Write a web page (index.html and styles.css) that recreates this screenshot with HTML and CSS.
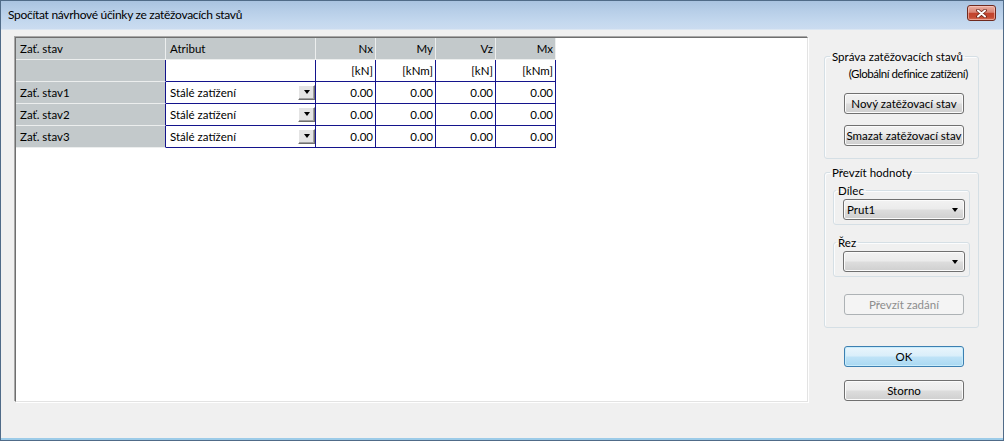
FILE: index.html
```html
<!DOCTYPE html>
<html lang="cs">
<head>
<meta charset="utf-8">
<title>Spočítat návrhové účinky ze zatěžovacích stavů</title>
<link rel="stylesheet" href="styles.css">
</head>
<body>
<div class="window">
  <div class="titlebar">
    <span class="title">Spočítat návrhové účinky ze zatěžovacích stavů</span>
    <span class="close" role="button" aria-label="Zavřít">
      <svg width="11" height="9" viewBox="0 0 11 9">
        <path d="M2 1.5 L9 7.5 M9 1.5 L2 7.5" stroke="#6b2418" stroke-width="3.6" stroke-linecap="round" fill="none"/>
        <path d="M2 1.5 L9 7.5 M9 1.5 L2 7.5" stroke="#ffffff" stroke-width="2" stroke-linecap="round" fill="none"/>
      </svg>
    </span>
  </div>
  <div class="client">
    <div class="gridbox">
      <table class="grid">
        <colgroup>
          <col class="w150"><col class="w150"><col class="w60"><col class="w60"><col class="w60"><col class="w60">
        </colgroup>
        <tr class="hdr">
          <th class="rh">Zať. stav</th>
          <th class="lh">Atribut</th>
          <th>Nx</th><th>My</th><th>Vz</th><th>Mx</th>
        </tr>
        <tr>
          <th class="rh"></th>
          <td class="attr"></td>
          <td>[kN]</td><td>[kNm]</td><td>[kN]</td><td>[kNm]</td>
        </tr>
        <tr>
          <th class="rh">Zať. stav1</th>
          <td class="attr"><div class="attr-in"><span>Stálé zatížení</span><span class="dd"><i class="tri"></i></span></div></td>
          <td>0.00</td><td>0.00</td><td>0.00</td><td>0.00</td>
        </tr>
        <tr>
          <th class="rh">Zať. stav2</th>
          <td class="attr"><div class="attr-in"><span>Stálé zatížení</span><span class="dd"><i class="tri"></i></span></div></td>
          <td>0.00</td><td>0.00</td><td>0.00</td><td>0.00</td>
        </tr>
        <tr>
          <th class="rh">Zať. stav3</th>
          <td class="attr"><div class="attr-in"><span>Stálé zatížení</span><span class="dd"><i class="tri"></i></span></div></td>
          <td>0.00</td><td>0.00</td><td>0.00</td><td>0.00</td>
        </tr>
      </table>
    </div>
    <div class="side">
      <fieldset class="group g1">
        <legend>Správa zatěžovacích stavů</legend>
        <div class="note">(Globální definice zatížení)</div>
        <div class="btn b-first">Nový zatěžovací stav</div>
        <div class="btn b-second">Smazat zatěžovací stav</div>
      </fieldset>
      <fieldset class="group g2">
        <legend>Převzít hodnoty</legend>
        <fieldset class="sub s1">
          <legend>Dílec</legend>
          <div class="combo"><span>Prut1</span><i class="tri"></i></div>
        </fieldset>
        <fieldset class="sub s2">
          <legend>Řez</legend>
          <div class="combo"><span></span><i class="tri"></i></div>
        </fieldset>
        <div class="btn disabled b-take">Převzít zadání</div>
      </fieldset>
      <div class="btn default b-ok">OK</div>
      <div class="btn b-cancel">Storno</div>
    </div>
  </div>
</div>
</body>
</html>
```
FILE: styles.css
```css
* { box-sizing: border-box; }
html, body { margin: 0; padding: 0; }
body {
  width: 1004px;
  height: 441px;
  overflow: hidden;
  background: #f0f0f0;
  font-family: Lato, "Noto Sans", sans-serif;
  font-size: 11.5px;
  color: #000;
}
.window {
  width: 1004px;
  height: 441px;
  display: flex;
  flex-direction: column;
  border: 1px solid #506b88;
  background: #f0f0f0;
}
.titlebar {
  flex: none;
  height: 29px;
  display: flex;
  align-items: flex-start;
  justify-content: space-between;
  padding: 0 7px 0 7px;
  background: linear-gradient(180deg, #a9c3e0 0%, #b7cee8 35%, #c4d8ee 75%, #cbdcf0 100%);
  border-bottom: 1px solid #dbe6f2;
}
.title {
  margin-top: 6px;
  font-size: 12px;
  line-height: 15px;
  letter-spacing: -0.3px;
}
.close {
  width: 29px;
  height: 16px;
  margin-top: 4px;
  border: 1px solid #6f2a1f;
  border-radius: 3px;
  background: linear-gradient(180deg, #eab0a2 0%, #d98373 45%, #c2432d 52%, #c44a32 80%, #d9735a 100%);
  box-shadow: inset 0 0 0 1px rgba(255, 210, 200, 0.55);
  display: flex;
  align-items: center;
  justify-content: center;
}
.client {
  flex: 1;
  display: flex;
  align-items: flex-start;
  padding: 7px 0 0 14px;
  border-bottom: 2px solid #9ccbe8;
}
.gridbox {
  flex: none;
  width: 793px;
  height: 365px;
  background: #fff;
  border: 1px solid;
  border-color: #6e6e6e #e3e3e3 #e3e3e3 #6e6e6e;
  box-shadow: -1px -1px 0 #a8a8a8, 1px 1px 0 #ffffff;
}
.grid {
  border-collapse: separate;
  border-spacing: 0;
  table-layout: fixed;
  width: 540px;
}
.w150 { width: 150px; }
.w60 { width: 60px; }
.grid th, .grid td {
  height: 22px;
  padding: 0 2px 0 4px;
  line-height: 21px;
  font-weight: normal;
  white-space: nowrap;
  overflow: hidden;
  border-right: 1px solid #14148c;
  border-bottom: 1px solid #14148c;
  text-align: right;
}
.grid th {
  background: #c3c9cb;
  border-color: #eceeee;
}
.grid th.rh, .grid th.lh { text-align: left; }
.grid tr:not(.hdr) th.rh { border-right-color: #14148c; }
.grid td.attr { text-align: left; padding: 0 0 0 4px; }
.attr-in {
  display: flex;
  align-items: center;
  justify-content: space-between;
  height: 21px;
}
.dd {
  width: 17px;
  height: 15px;
  margin-top: -1px;
  background: #e4e4e4;
  border: 1px solid;
  border-color: #ffffff #6f6f6f #6f6f6f #ffffff;
  box-shadow: inset -1px -1px 0 #a0a0a0;
  display: flex;
  align-items: center;
  justify-content: center;
}
.tri {
  display: block;
  width: 0;
  height: 0;
  border-left: 3.5px solid transparent;
  border-right: 3.5px solid transparent;
  border-top: 4px solid #000;
}
.side {
  flex: none;
  width: 155px;
  margin-left: 16px;
  padding-top: 12px;
}
fieldset {
  margin: 0;
  padding: 0;
  min-inline-size: 0;
  border: 1px solid #d5dfe5;
  border-radius: 3px;
  box-shadow: inset 1px 1px 0 #fbfcfd;
}
legend {
  margin-left: 5px;
  padding: 0 2px;
  line-height: 15px;
}
.group { width: 155px; }
.g1 { padding-bottom: 12px; }
.note {
  margin-top: 2px;
  line-height: 15px;
  text-align: right;
  padding-right: 10px;
  letter-spacing: -0.45px;
}
.btn {
  display: flex;
  align-items: center;
  justify-content: center;
  width: 120px;
  height: 21px;
  margin-left: 19px;
  line-height: 15px;
  border: 1px solid #707070;
  border-radius: 3px;
  background: linear-gradient(180deg, #f2f2f2 0%, #ebebeb 48%, #dddddd 52%, #cfcfcf 100%);
  box-shadow: inset 0 0 0 1px #fbfbfb;
}
.b-first { margin-top: 12px; }
.b-second { margin-top: 11px; }
.g2 { margin-top: 6px; padding-bottom: 12px; }
.sub {
  margin: 3px 8px 0 8px;
  padding-bottom: 4px;
}
.sub legend { margin-left: 2px; }
.s2 { margin-top: 10px; }
.combo {
  display: flex;
  align-items: center;
  justify-content: space-between;
  width: 122px;
  height: 21px;
  margin: 1px 0 0 9px;
  padding: 0 6px 0 3px;
  border: 1px solid #707070;
  border-radius: 3px;
  background: linear-gradient(180deg, #f2f2f2 0%, #ebebeb 48%, #dddddd 52%, #cfcfcf 100%);
  box-shadow: inset 0 0 0 1px #fbfbfb;
}
.b-take { margin-top: 17px; }
.btn.disabled {
  color: #8d8d8d;
  border-color: #adb2b5;
  background: #f4f4f4;
  box-shadow: none;
}
.b-ok { margin-top: 18px; margin-left: 20px; }
.btn.default {
  border-color: #3c7fb1;
  background: linear-gradient(180deg, #e9f5fc 0%, #d9eefa 48%, #bfe3f7 52%, #a9d8f2 100%);
  box-shadow: inset 0 0 0 1px #c8ecfb;
}
.b-cancel { margin-top: 13px; margin-left: 20px; }
```
